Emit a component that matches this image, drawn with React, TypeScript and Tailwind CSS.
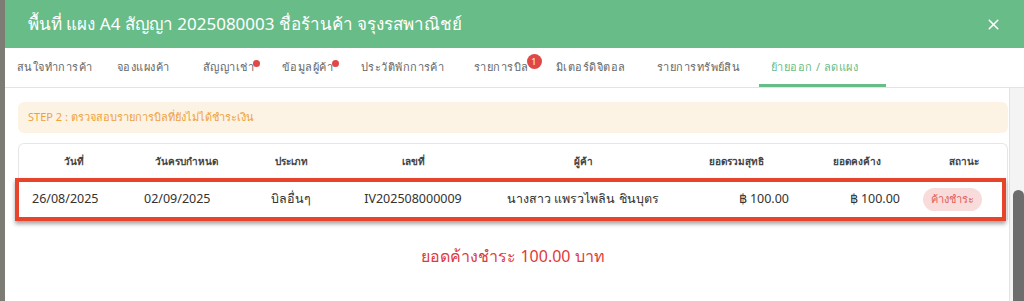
import { X } from 'lucide-react';

const tabs = [
  { label: 'สนใจทำการค้า', w: 'w-[100px]' },
  { label: 'จองแผงค้า', w: 'w-[86px]' },
  { label: 'สัญญาเช่า', w: 'w-[79px]', dot: true },
  { label: 'ข้อมูลผู้ค้า', w: 'w-[79px]', dot: true },
  { label: 'ประวัติพักการค้า', w: 'w-[113px]' },
  { label: 'รายการบิล', w: 'w-[82px]', badge: '1' },
  { label: 'มิเตอร์ดิจิตอล', w: 'w-[101px]' },
  { label: 'รายการทรัพย์สิน', w: 'w-[114px]' },
  { label: 'ย้ายออก / ลดแผง', w: 'w-[127px]', active: true },
];

const cols = 'grid grid-cols-[110px_114px_96px_148px_192px_114px_128px_1fr]';

const headers = ['วันที่', 'วันครบกำหนด', 'ประเภท', 'เลขที่', 'ผู้ค้า', 'ยอดรวมสุทธิ', 'ยอดคงค้าง', 'สถานะ'];

export default function App() {
  return (
    <div className="flex h-[301px] w-[1024px] overflow-hidden bg-white font-['Noto_Sans',sans-serif]">
      <div className="w-[5px] shrink-0 bg-[#7c7c74]"></div>
      <div className="flex flex-1 flex-col">
        <div className="flex h-[48px] items-center justify-between bg-[#68bc88] pl-[23px] pr-[22px]">
          <h1 className="text-[17px] text-white">พื้นที่ แผง A4 สัญญา 2025080003 ชื่อร้านค้า จรุงรสพาณิชย์</h1>
          <X className="h-[17px] w-[17px] text-white" strokeWidth={2.2} />
        </div>
        <div className="flex h-[40px] border-b border-[#e3e3e3]">
          {tabs.map((t) => (
            <div
              key={t.label}
              className={`${t.w} relative flex shrink-0 items-center pl-[12px] text-[11px] tracking-[0.45px] ${
                t.active ? 'border-b-[3px] border-[#68bc88] pt-[3px] text-[#68bc88]' : 'text-[#666]'
              }`}
            >
              <span className="relative">
                {t.label}
                {t.dot && <span className="absolute right-[-6px] top-[1px] h-[7px] w-[7px] rounded-full bg-[#e04848]"></span>}
                {t.badge && (
                  <span className="absolute right-[-13px] top-[-5px] flex h-[15px] w-[15px] items-center justify-center rounded-full bg-[#e04848] text-[9px] text-white">
                    {t.badge}
                  </span>
                )}
              </span>
            </div>
          ))}
        </div>
        <div className="flex flex-1">
          <div className="flex flex-1 flex-col pl-[13px] pt-[14px]">
            <div className="flex h-[31px] items-center rounded-md bg-[#fdf3e4] pl-[10px] text-[11px] text-[#eda23c]">
              STEP 2 : ตรวจสอบรายการบิลที่ยังไม่ได้ชำระเงิน
            </div>
            <div className="mt-[10px] rounded-t-md border border-b-0 border-[#e6e6e6]">
              <div className={`${cols} h-[35px] items-center text-[10px] font-semibold text-[#444]`}>
                {headers.map((h) => (
                  <div key={h} className="text-center">
                    {h}
                  </div>
                ))}
              </div>
              <div className="relative">
                <div className={`${cols} h-[41px] items-center text-[12.5px] text-[#333]`}>
                  <div className="pl-[13px]">26/08/2025</div>
                  <div className="pl-[15px]">02/09/2025</div>
                  <div className="text-center">บิลอื่นๆ</div>
                  <div className="text-center">IV202508000009</div>
                  <div className="text-center">นางสาว แพรวไพลิน ชินบุตร</div>
                  <div className="pr-[4px] text-right">฿ 100.00</div>
                  <div className="pr-[21px] text-right">฿ 100.00</div>
                  <div className="pl-[2px]">
                    <span className="inline-block rounded-full bg-[#f8dcdc] px-[8px] py-[3px] text-[11px] text-[#e0605a]">ค้างชำระ</span>
                  </div>
                </div>
                <div className="pointer-events-none absolute inset-y-[-1px] left-[-4px] right-[1px] border-[4px] border-[#e8432b] shadow-[0_3px_4px_rgba(0,0,0,0.35)]"></div>
              </div>
            </div>
            <div className="mt-[24px] text-center text-[16px] text-[#e03a3a]">ยอดค้างชำระ 100.00 บาท</div>
          </div>
          <div className="ml-[1px] flex w-[15px] flex-col border-l border-[#e3e3e3] bg-[#f4f4f4] pt-[102px]">
            <div className="ml-[3px] flex-1 rounded-t-full bg-[#6d6d6d]"></div>
          </div>
        </div>
      </div>
    </div>
  );
}
